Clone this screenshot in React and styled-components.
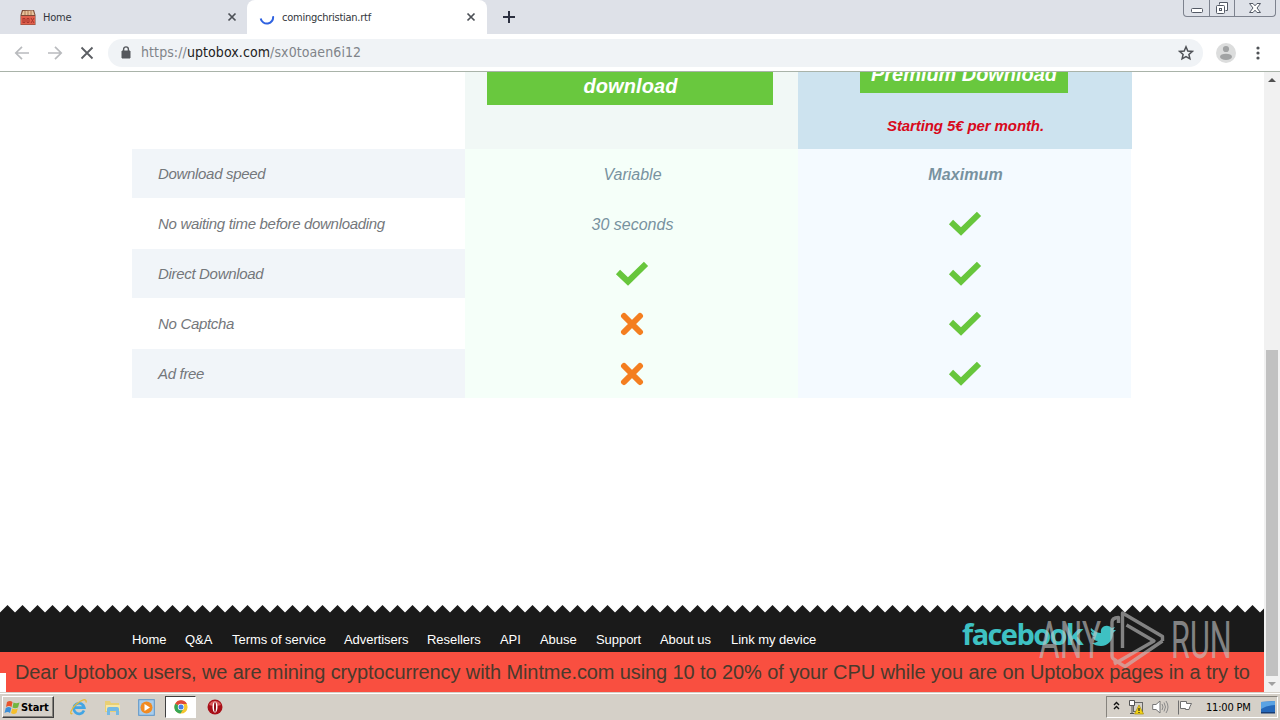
import React from 'react';
import styled, { createGlobalStyle } from 'styled-components';

const GlobalStyle = createGlobalStyle`
    * {
        box-sizing: border-box;
    }
    body {
        margin: 0;
        overflow: hidden;
        background: #fff;
        font-family: "Liberation Sans", Arial, sans-serif;
    }
    svg {
        display: block;
        flex: none;
    }
`;

const features = [
    { label: 'Download speed', free: 'Variable', premium: 'Maximum' },
    { label: 'No waiting time before downloading', free: '30 seconds', premium: true },
    { label: 'Direct Download', free: true, premium: true },
    { label: 'No Captcha', free: false, premium: true },
    { label: 'Ad free', free: false, premium: true },
];

const links = [
    ['Home', 53],
    ['Q&A', 47],
    ['Terms of service', 112],
    ['Advertisers', 83],
    ['Resellers', 73],
    ['API', 40],
    ['Abuse', 56],
    ['Support', 64],
    ['About us', 71],
    ['Link my device', 90],
];

//Icons
const Check = () => (
    <svg width="34" height="26" viewBox="0 0 34 26">
        <path d="M3 11 13 20.500 31 2.800" fill="none" stroke="#67c63c" strokeWidth="6" />
    </svg>
);

const Cross = () => (
    <svg width="24" height="24" viewBox="0 0 24 24">
        <path d="M4 4 20 20M20 4 4 20" fill="none" stroke="#f47e20" strokeWidth="6" strokeLinecap="round" />
    </svg>
);

const CloseIcon = () => (
    <svg width="10" height="10" viewBox="0 0 10 10">
        <path d="M1.5 1.5 8.5 8.5M8.5 1.5 1.5 8.5" stroke="#4c5056" strokeWidth="1.7" />
    </svg>
);

const BoxIcon = () => (
    <svg width="16" height="17" viewBox="0 0 16 17">
        <path d="M2 1 14 1 15.500 6V16H.5V6Z" fill="#7c4a38" />
        <path d="M3 2 13 1.500 14.500 6H1.500Z" fill="#e6c39c" />
        <path d="M5 2V6M8 2V6M11 2V6" stroke="#b07850" />
        <path d="M1 7H15V15.500H1Z" fill="#e0604c" />
        <path d="M3 9V14M3 9.500H5V13.500H3M7 9.500H9V13.500H7ZM11 9 14 14M14 9 11 14" fill="none" stroke="#a8352c" strokeWidth="1" />
    </svg>
);

const Spinner = () => (
    <svg width="16" height="16" viewBox="0 0 16 16">
        <path d="M1.700 9.500A6.200 6.200 0 0 0 14 7.200" fill="none" stroke="#2f62e0" strokeWidth="2" />
    </svg>
);

const Arrow = ({ flip }) => (
    <svg width="16" height="16" viewBox="0 0 16 16" transform={flip ? 'scale(-1 1)' : undefined}>
        <path d="M15 8H2M8 1.8 1.8 8 8 14.2" fill="none" stroke="#b9bbbe" strokeWidth="1.7" />
    </svg>
);

const Stop = () => (
    <svg width="14" height="14" viewBox="0 0 14 14">
        <path d="M1.500 1.500 12.500 12.500M12.500 1.500 1.500 12.500" stroke="#5b5e63" strokeWidth="1.800" />
    </svg>
);

const Lock = () => (
    <svg width="10" height="13" viewBox="0 0 10 13">
        <path d="M1 5H9V12H1Z" fill="#55585d" stroke="#55585d" strokeLinejoin="round" />
        <path d="M2.6 5V3.3A2.4 2.4 0 0 1 7.4 3.3V5" fill="none" stroke="#55585d" strokeWidth="1.4" />
    </svg>
);

const Star = () => (
    <svg width="16" height="16" viewBox="0 0 16 16">
        <path d="M8 1.8 9.8 6 14.3 6.4 10.9 9.4 11.9 13.8 8 11.5 4.1 13.8 5.1 9.4 1.7 6.4 6.2 6Z" fill="none" stroke="#4f5257" strokeWidth="1.5" />
    </svg>
);

const Avatar = () => (
    <svg width="20" height="20" viewBox="0 0 20 20">
        <circle cx="10" cy="10" r="10" fill="#dcdddd" />
        <circle cx="10" cy="6" r="3.1" fill="#a1a3a4" />
        <ellipse cx="10" cy="13.8" rx="6" ry="3.1" fill="#a1a3a4" />
    </svg>
);

const Dots = () => (
    <svg width="4" height="14" viewBox="0 0 4 14">
        <circle cx="2" cy="2" r="1.6" fill="#505357" />
        <circle cx="2" cy="7" r="1.6" fill="#505357" />
        <circle cx="2" cy="12" r="1.6" fill="#505357" />
    </svg>
);

const MinimizeIcon = () => (
    <svg width="12" height="14" viewBox="0 0 12 14">
        <rect x=".5" y="7.5" width="11" height="4" rx="1" fill="#fff" stroke="#535965" />
    </svg>
);

const RestoreIcon = () => (
    <svg width="14" height="14" viewBox="0 0 14 14">
        <path d="M4.5 3.5V1.5H12.5V9.5H10.5" fill="#fff" stroke="#535965" />
        <rect x="1.5" y="4.5" width="8" height="8" rx="1" fill="#fff" stroke="#535965" />
        <rect x="4.5" y="7.5" width="2" height="2" fill="none" stroke="#535965" />
    </svg>
);

const WindowClose = () => (
    <svg width="12" height="14" viewBox="0 0 12 14">
        <path d="M.5 2.500H4L6 4.800 8 2.500H11.500L8 7 11.500 11.500H8L6 9.200 4 11.500H.5L4 7Z" fill="#fff" stroke="#535965" />
    </svg>
);

const Bird = () => (
    <svg width="26" height="22" viewBox="0 0 26 22">
        <path d="M1 3C4 6 8 8 11 8C10 3 14 0 18 1C20 1 21 3 22 3L25 2 23 5 26 5 23 8C23 15 18 21 11 21C7 21 4 20 2 18C5 18 7 17 8 16C5 16 3 14 3 12H5C2 11 1 9 1 7L4 8C1 6 0 5 1 3Z" fill="#3ec1c3" />
    </svg>
);

const ZigZag = () => (
    <svg width="1264" height="8" viewBox="0 0 1264 8">
        <defs>
            <pattern id="teeth" width="15" height="8" patternUnits="userSpaceOnUse">
                <path d="M0 7.5 7.5 0 15 7.5V8H0Z" fill="#1a1a1a" />
            </pattern>
        </defs>
        <rect width="1264" height="8" fill="url(#teeth)" />
    </svg>
);

const PlayMark = () => (
    <svg width="58" height="62" viewBox="0 0 58 62">
        <g fill="none" stroke="#c3c3c3" strokeWidth="3.4" strokeLinejoin="round">
            <path d="M10.500 14V8.500Q4 9 4 13V47Q4 50 9 52" />
            <path d="M14.500 39V4L54.500 27.500V32" />
            <path d="M18.500 16 46 32 6 55" />
            <path d="M54.500 32 17 57.500 6 51" />
        </g>
    </svg>
);

const WindowsFlag = () => (
    <svg width="16" height="15" viewBox="0 0 16 15">
        <path d="M3 2Q6 0 8.500 2L7.500 7Q5 5 2 7Z" fill="#e9542c" />
        <path d="M9.500 2.500Q12 4 15.500 2.500L14 7.500Q11 9 8.500 7.500Z" fill="#72b640" />
        <path d="M1.800 8Q5 6 7.300 8L6 13Q4 11 .5 13Z" fill="#3c8fd8" />
        <path d="M8.300 8.500Q11 10 13.800 8.500L12.500 13Q9.500 15 7 13Z" fill="#f5bf2b" />
    </svg>
);

const ExplorerIcon = () => (
    <svg width="18" height="18" viewBox="0 0 18 18">
        <path d="M14 12.500A5.300 5.300 0 1 1 14.300 9.600H5" fill="none" stroke="#42a5e4" strokeWidth="2.600" />
        <path d="M2.500 15.500C-1 17 1 11 6 6.500C11 2 17 -.5 16 4.500" fill="none" stroke="#e6b93c" strokeWidth="1.300" />
    </svg>
);

const FolderIcon = () => (
    <svg width="17" height="17" viewBox="0 0 17 17">
        <path d="M1 2H6L7 4H15V13H1Z" fill="#e9cf74" />
        <path d="M2 6H16V12H2Z" fill="#f7e7a4" />
        <path d="M3 16V10Q3 8 5 8H13Q15 8 15 10V16H12V12H6V16Z" fill="#74b9e4" />
    </svg>
);

const MediaIcon = () => (
    <svg width="17" height="17" viewBox="0 0 17 17">
        <rect x=".7" y=".7" width="15.600" height="15.600" fill="#a9cdec" stroke="#5a94ca" />
        <circle cx="8.500" cy="8.500" r="6" fill="#f18b22" />
        <path d="M6.500 5 12 8.500 6.500 12Z" fill="#fff" />
    </svg>
);

const ChromeIcon = () => (
    <svg width="14" height="14" viewBox="0 0 14 14">
        <circle cx="7" cy="7" r="6.600" fill="#f6c62f" />
        <path d="M7 7 1.200 3.700A6.600 6.600 0 0 1 12.900 4H7Z" fill="#df4939" />
        <path d="M7 7 1.200 3.700A6.600 6.600 0 0 0 6.500 13.600L9.600 8.500Z" fill="#37a656" />
        <circle cx="7" cy="7" r="3.200" fill="#fff" />
        <circle cx="7" cy="7" r="2.500" fill="#467fe6" />
    </svg>
);

const OperaIcon = () => (
    <svg width="16" height="16" viewBox="0 0 16 16">
        <circle cx="8" cy="8" r="7.500" fill="#a80f18" />
        <path d="M2 6A6.500 6.500 0 0 1 14 6Q8 8 2 6Z" fill="#d95a5b" />
        <ellipse cx="8" cy="8" rx="2.500" ry="5.500" fill="#fff" />
        <ellipse cx="8" cy="8" rx="1" ry="5" fill="#8e0d14" />
    </svg>
);

const Chevrons = () => (
    <svg width="7" height="12" viewBox="0 0 7 12">
        <path d="M1 4 3.500 1.500 6 4M1 8 3.500 5.500 6 8" fill="none" stroke="#111" strokeWidth="1.400" />
    </svg>
);

const NetworkIcon = () => (
    <svg width="16" height="16" viewBox="0 0 16 16">
        <rect x="5.500" y="3.500" width="9" height="9" fill="#d5d2cb" stroke="#666" />
        <path d="M1.500 1.500H6.500V6.500H1.500ZM4 7V15M2 14.500H6" fill="#fff" stroke="#555" />
        <path d="M11 6 15.500 15H6.500Z" fill="#f4d414" stroke="#a58a0d" strokeWidth=".7" />
        <path d="M11 9V12M11 13V14" stroke="#222" strokeWidth="1.200" />
    </svg>
);

const VolumeIcon = () => (
    <svg width="17" height="14" viewBox="0 0 17 14">
        <path d="M.7 4.500H4L8 1V13L4 9.500H.7Z" fill="#fff" stroke="#777" />
        <path d="M10 4Q12 7 10 10M12 2.500Q15 7 12 11.500M14 1Q18 7 14 13" fill="none" stroke="#8a8a8a" />
    </svg>
);

const FlagIcon = () => (
    <svg width="16" height="15" viewBox="0 0 16 15">
        <path d="M1.500 14.500V.5M3.500 1.500H9.500V3.500H14.500L13 6.500 12 9.500H8.500V8.500H3.500Z" fill="#fff" stroke="#6f6f6f" />
    </svg>
);

const DesktopIcon = () => (
    <svg width="17" height="13" viewBox="0 0 17 13">
        <path d="M1 1 15 0V11H1Z" fill="#2568ba" />
        <path d="M1 1 15 0V4Q7 4 1 8Z" fill="#5aa3e4" />
        <path d="M1 11H15V12.500H1Z" fill="#173c75" />
    </svg>
);

const Mark = ({ value }) => {
    if (value === true) return <Check />;
    if (value === false) return <Cross />;
    return <ValueText>{value}</ValueText>;
};

const Browser = () => (
    <>
        <TabStrip>
            <Tab>
                <BoxIcon />
                <TabTitle>Home</TabTitle>
                <CloseIcon />
            </Tab>
            <Tab $active>
                <Spinner />
                <TabTitle>comingchristian.rtf</TabTitle>
                <CloseIcon />
            </Tab>
            <NewTab>
                <svg width="12" height="12" viewBox="0 0 12 12">
                    <path d="M6 0V12M0 6H12" stroke="#2c3040" strokeWidth="2" />
                </svg>
            </NewTab>
            <WindowButtons>
                <WindowButton $width={25}><MinimizeIcon /></WindowButton>
                <WindowButton $width={25}><RestoreIcon /></WindowButton>
                <WindowButton $width={41}><WindowClose /></WindowButton>
            </WindowButtons>
        </TabStrip>
        <Toolbar>
            <NavIcons>
                <Arrow />
                <Arrow flip />
                <Stop />
            </NavIcons>
            <AddressBar>
                <Lock />
                <Url>https://<b>uptobox.com</b>/sx0toaen6i12</Url>
                <Star />
            </AddressBar>
            <MenuIcons>
                <Avatar />
                <Dots />
            </MenuIcons>
        </Toolbar>
    </>
);

const Comparison = () => (
    <Table>
        <HeadRow>
            <HeadCell />
            <HeadCell $bg="#f1f8f6" $bottom={44}>
                <DownloadButton $width={286}>download</DownloadButton>
            </HeadCell>
            <HeadCell $bg="#cde3ef" $bottom={14}>
                <DownloadButton $width={208} $premium>Premium Download</DownloadButton>
                <Price>Starting 5€ per month.</Price>
            </HeadCell>
        </HeadRow>
        {features.map((feature, i) => (
            <Row key={feature.label}>
                <Label $striped={i % 2 === 0}>{feature.label}</Label>
                <Value $bg="#f5fff9"><Mark value={feature.free} /></Value>
                <Value $bg="#f4faff" $strong><Mark value={feature.premium} /></Value>
            </Row>
        ))}
    </Table>
);

const Footer = () => (
    <FooterStyle>
        <ZigZag />
        <FooterBody>
            <FooterNav>
                {links.map(([name, width]) => (
                    <FooterLink key={name} $width={width}>{name}</FooterLink>
                ))}
            </FooterNav>
            <Facebook>facebook</Facebook>
            <Bird />
        </FooterBody>
        <Notice>
            Dear Uptobox users, we are mining cryptocurrency with Mintme.com using 10 to 20% of your CPU while you are on Uptobox pages in a try to
            <StatusCorner />
        </Notice>
    </FooterStyle>
);

const App = () => (
    <Screen>
        <GlobalStyle />
        <Browser />
        <Viewport>
            <Page>
                <Comparison />
                <Footer />
            </Page>
            <Scrollbar>
                <ScrollArrow />
                <ScrollTrack>
                    <ScrollThumb />
                </ScrollTrack>
                <ScrollArrow $down />
            </Scrollbar>
        </Viewport>
        <Taskbar>
            <StartButton><WindowsFlag />Start</StartButton>
            <QuickLaunch>
                <Launcher><ExplorerIcon /></Launcher>
                <Launcher><FolderIcon /></Launcher>
                <Launcher><MediaIcon /></Launcher>
                <Launcher $active><ChromeIcon /></Launcher>
                <Launcher><OperaIcon /></Launcher>
            </QuickLaunch>
            <Tray>
                <Chevrons />
                <NetworkIcon />
                <VolumeIcon />
                <FlagIcon />
                <Clock>11:00 PM</Clock>
                <DesktopIcon />
            </Tray>
        </Taskbar>
        <Watermark>
            <WatermarkText $scale={.61}>ANY</WatermarkText>
            <PlayMark />
            <WatermarkText $scale={.59}>RUN</WatermarkText>
        </Watermark>
    </Screen>
);

const Screen = styled.div`
    position: relative;
    display: flex;
    flex-direction: column;
    width: 1280px;
    height: 720px;
    overflow: hidden;
`;

//Browser window
const TabStrip = styled.div`
    display: flex;
    height: 34px;
    background: #dee1e8;
`;

const Tab = styled.div`
    display: flex;
    align-items: center;
    width: ${props => (props.$active ? 240 : 247)}px;
    padding: 0 ${props => (props.$active ? 11 : 10)}px 0 ${props => (props.$active ? 12 : 20)}px;
    border-radius: 8px 8px 0 0;
    background: ${props => (props.$active ? '#fff' : 'transparent')};
`;

const TabTitle = styled.span`
    flex: 1;
    margin-left: 7px;
    font: 11px "DejaVu Sans Condensed", "DejaVu Sans", sans-serif;
    font-stretch: condensed;
    letter-spacing: -.25px;
    color: #33363b;
`;

const NewTab = styled.div`
    display: flex;
    align-items: center;
    margin-left: 16px;
`;

const WindowButtons = styled.div`
    display: flex;
    height: 17px;
    margin: 0 4px 0 auto;
    border: 1px solid #7d828e;
    border-top: 0;
    border-radius: 0 0 4px 4px;
`;

const WindowButton = styled.div`
    display: flex;
    justify-content: center;
    width: ${props => props.$width}px;
    padding-top: 1px;
    & + & {
        border-left: 1px solid #7d828e;
    }
`;

const Toolbar = styled.div`
    display: flex;
    align-items: center;
    height: 38px;
    padding-right: 20px;
    border-bottom: 1px solid #a9b3a9;
    background: #fff;
`;

const NavIcons = styled.div`
    display: flex;
    align-items: center;
    gap: 17px;
    width: 108px;
    padding-left: 14px;
`;

const AddressBar = styled.div`
    display: flex;
    align-items: center;
    width: 1095px;
    height: 28px;
    padding: 0 9px 0 13px;
    border-radius: 14px;
    background: #f0f3f6;
`;

const Url = styled.span`
    flex: 1;
    margin: -2px 0 0 10px;
    font: 14px "DejaVu Sans Condensed", "DejaVu Sans", sans-serif;
    font-stretch: condensed;
    letter-spacing: .09px;
    color: #808489;
    b {
        font-weight: normal;
        color: #222;
    }
`;

const MenuIcons = styled.div`
    display: flex;
    flex: 1;
    align-items: center;
    justify-content: space-between;
    padding-left: 13px;
`;

const Viewport = styled.div`
    display: flex;
    height: 620px;
`;

const Page = styled.div`
    display: flex;
    flex-direction: column;
    justify-content: space-between;
    width: 1264px;
    background: #fff;
`;

const Scrollbar = styled.div`
    display: flex;
    flex-direction: column;
    width: 16px;
    background: #f1f1f1;
`;

const ScrollArrow = styled.div`
    display: flex;
    align-items: center;
    justify-content: center;
    height: 16px;
    &::before {
        content: "";
        border: 4px solid transparent;
        border-${props => (props.$down ? 'top' : 'bottom')}-color: ${props => (props.$down ? '#a0a0a0' : '#505050')};
        border-${props => (props.$down ? 'bottom' : 'top')}-width: 0;
    }
`;

const ScrollTrack = styled.div`
    display: flex;
    flex: 1;
    align-items: flex-end;
    justify-content: center;
`;

const ScrollThumb = styled.div`
    width: 12px;
    height: 326px;
    background: #c1c1c1;
`;

//Comparison table
const Table = styled.div`
    width: 1000px;
    margin-left: 132px;
`;

const HeadRow = styled.div`
    display: grid;
    grid-template-columns: 333px 333px 334px;
`;

const HeadCell = styled.div`
    display: flex;
    flex-direction: column;
    align-items: center;
    justify-content: flex-end;
    height: 77px;
    padding-bottom: ${props => props.$bottom || 0}px;
    overflow: hidden;
    background: ${props => props.$bg || '#fff'};
`;

const DownloadButton = styled.div`
    flex: none;
    width: ${props => props.$width}px;
    height: 50px;
    padding: 20px 0 0 ${props => (props.$premium ? 0 : 2)}px;
    margin: 0 ${props => (props.$premium ? '2px 23px' : '4px 0')} 0;
    background: #69c83e;
    color: #fff;
    text-align: center;
    white-space: nowrap;
    font-size: 20px;
    font-weight: bold;
    font-style: italic;
    line-height: 23px;
    letter-spacing: ${props => (props.$premium ? -.05 : .1)}px;
`;

const Price = styled.p`
    margin: 0;
    padding-left: 1px;
    font-size: 15px;
    font-weight: bold;
    font-style: italic;
    line-height: 19px;
    letter-spacing: -.1px;
    color: #d80a1c;
`;

const Row = styled.div`
    display: grid;
    grid-template-columns: 333px 333px 333px;
    height: 50px;
    &:last-child {
        height: 49px;
    }
`;

const Label = styled.div`
    display: flex;
    align-items: center;
    height: 49px;
    padding-left: 26px;
    background: ${props => (props.$striped ? '#f1f5f9' : '#fff')};
    color: #74777b;
    font-size: 15px;
    font-style: italic;
    letter-spacing: -.32px;
`;

const Value = styled.div`
    display: flex;
    align-items: center;
    justify-content: center;
    background: ${props => props.$bg};
    color: #78929f;
    font-size: 16px;
    font-style: italic;
    font-weight: ${props => (props.$strong ? 'bold' : 'normal')};
    letter-spacing: ${props => (props.$strong ? .1 : 0)}px;
`;

const ValueText = styled.span`
    padding: 1px 0 0 2px;
    line-height: 18px;
`;

//Footer
const FooterStyle = styled.div`
    display: flex;
    flex-direction: column;
`;

const FooterBody = styled.div`
    display: flex;
    align-items: center;
    height: 39px;
    padding: 7px 0 0 132px;
    background: #1a1a1a;
`;

const FooterNav = styled.div`
    display: flex;
    width: 830px;
    padding-top: 6px;
`;

const FooterLink = styled.span`
    width: ${props => props.$width}px;
    white-space: nowrap;
    font-size: 13px;
    letter-spacing: -.05px;
    color: #fff;
`;

const Facebook = styled.span`
    width: 128px;
    margin-top: -4px;
    font: 700 29px "Open Sans", sans-serif;
    letter-spacing: -1.6px;
    line-height: 30px;
    color: #3ec1c3;
`;

const Notice = styled.div`
    position: relative;
    height: 40px;
    padding-left: 15px;
    background: #f94f40;
    color: #4a3a2c;
    font-size: 20px;
    line-height: 40px;
    letter-spacing: -.1px;
    white-space: nowrap;
`;

const StatusCorner = styled.div`
    position: absolute;
    left: 0;
    bottom: 0;
    width: 6px;
    height: 19px;
    background: #fff;
`;

//Taskbar
const Taskbar = styled.div`
    display: flex;
    align-items: center;
    height: 28px;
    padding: 2px 2px 0;
    background: #d5d0c8;
    box-shadow: inset 0 1px #d5d0c8, inset 0 2px #fff;
    font-family: "DejaVu Sans Condensed", "DejaVu Sans", sans-serif;
`;

const StartButton = styled.div`
    display: flex;
    align-items: center;
    gap: 1px;
    width: 52px;
    height: 22px;
    padding-left: 1px;
    border: 1px solid;
    border-color: #fff #404040 #404040 #fff;
    box-shadow: inset -1px -1px #86837d;
    font-size: 11px;
    font-weight: bold;
    letter-spacing: -.1px;
`;

const QuickLaunch = styled.div`
    display: flex;
    gap: 3px;
    margin-left: 9px;
`;

const Launcher = styled.div`
    display: flex;
    align-items: center;
    justify-content: center;
    width: 31px;
    height: 22px;
    border: ${props => (props.$active ? '1px solid' : '0')};
    border-color: #404040 #fff #fff #404040;
    background: ${props => (props.$active ? '#fff' : 'transparent')};
`;

const Tray = styled.div`
    display: flex;
    align-items: center;
    gap: 8px;
    width: 172px;
    height: 22px;
    margin-left: auto;
    padding-left: 6px;
    border: 1px solid;
    border-color: #86837d #fff #fff #86837d;
`;

const Clock = styled.span`
    width: 46px;
    margin-left: 5px;
    white-space: nowrap;
    font-size: 11px;
    letter-spacing: -.2px;
`;

const Watermark = styled.div`
    position: absolute;
    left: 1039px;
    top: 609px;
    display: flex;
    align-items: flex-start;
    gap: 5px;
    opacity: .62;
`;

const WatermarkText = styled.span`
    width: 64px;
    padding-top: 1px;
    font: 400 52px/62px Roboto, sans-serif;
    color: #c3c3c3;
    transform: scaleX(${props => props.$scale});
    transform-origin: left;
`;

export default App;
